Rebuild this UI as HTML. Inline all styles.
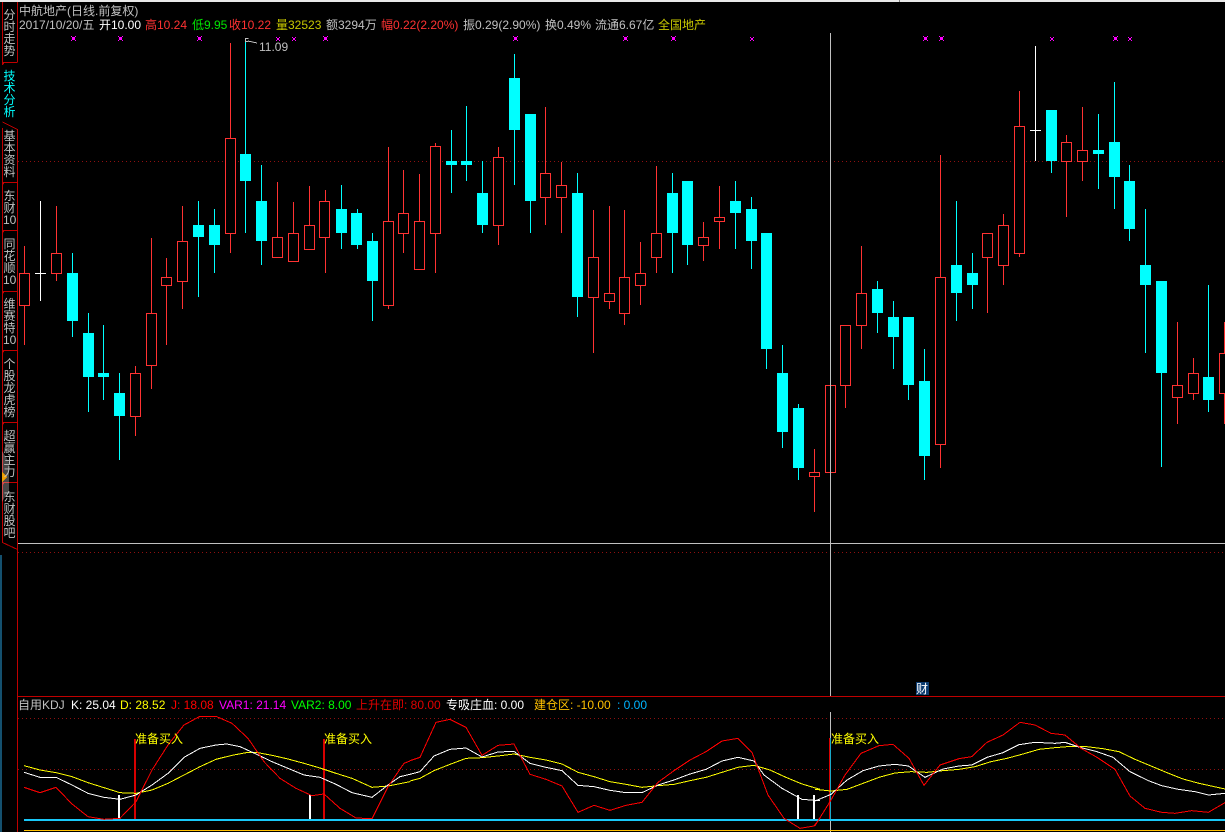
<!DOCTYPE html>
<html><head><meta charset="utf-8"><title>中航地产</title>
<style>
html,body{margin:0;padding:0;background:#000;width:1225px;height:832px;overflow:hidden}
body{position:relative;font-family:"Liberation Sans","WenQuanYi Zen Hei","Noto Sans CJK SC",sans-serif;font-size:12px;line-height:14px;color:#c0c0c0}
svg{position:absolute;left:0;top:0}
.t{position:absolute;white-space:pre;height:14px}
.v{position:absolute;left:3px;width:13px;font-size:12px;line-height:12px;text-align:center;color:#c0c0c0}
.r{color:#ff3232}.g{color:#00e600}.y{color:#c8c800}.w{color:#fff}
</style></head><body>
<svg width="1225" height="832" viewBox="0 0 1225 832" shape-rendering="crispEdges" fill="none">
<defs>
<path id="m" fill="#ff00ff" d="M-1 37h3v3h-3zM-2 36h1v1h-1zM2 36h1v1h-1zM-2 40h1v1h-1zM2 40h1v1h-1z"/>
<path id="s" fill="#ff00ff" d="M-1 38h2v2h-2zM-2 37h1v1h-1zM1 37h1v1h-1zM-2 40h1v1h-1zM1 40h1v1h-1z"/>
</defs>
<rect x="0" y="0" width="1225" height="2" fill="#e8e8e8"/>
<rect x="899" y="0" width="1" height="2" fill="#808080"/>
<rect x="0" y="555" width="2" height="277" fill="#14506e"/>
<!-- sidebar -->
<path stroke="#c00000" d="M2.5 2V62.5H17M17.5 2V62.5M2.5 122L17.5 129.5M17.5 129V832M2.5 128V542.5L17.5 549.5M2.5 182.5H17M2.5 230.5H17M2.5 291.5H17M2.5 350.5H17M2.5 422.5H17M2.5 482.5H17"/>
<path fill="#c00000" d="M2 62h3l-2 3h-1zM2 182h3l-2 3h-1zM2 230h3l-2 3h-1zM2 291h3l-2 3h-1zM2 350h3l-2 3h-1zM2 422h3l-2 3h-1zM2 482h3l-2 3h-1z"/>
<polygon points="2,451 9,462 9,490 2,502" fill="#fff" fill-opacity=".28" shape-rendering="auto"/>
<polygon points="2,472 7,477 2,482" fill="#f0a000"/>
<!-- separators and dotted -->
<path stroke="#901010" stroke-dasharray="1 3" d="M18 161.5H1225M18 552.5H1225M18 718.5H1225M18 769.5H1225"/>
<path stroke="#c00000" d="M18 696.5H1225"/>
<!-- red wicks -->
<path stroke="#ff3232" d="M24.5 246V345M56.5 206V281M135.5 366V436M151.5 238V389M166.5 258V345M182.5 206V309M230.5 43V253M277.5 182V257M293.5 202V261M309.5 186V249M325.5 190V273M388.5 147V309M403.5 170V253M419.5 174V269M435.5 143V273M498.5 147V245M545.5 107V225M561.5 162V233M593.5 210V353M609.5 206V309M624.5 210V325M640.5 242V305M656.5 166V273M703.5 222V261M719.5 186V249M814.5 449V512M845.5 325V408M861.5 246V349M940.5 155V468M987.5 233V313M1003.5 214V285M1019.5 91V257M1066.5 135V217M1082.5 107V181M1177.5 322V424M1193.5 358V400M1224.5 322V424"/>
<!-- cyan wicks -->
<path stroke="#00ffff" d="M72.5 253V337M88.5 313V412M103.5 325V400M119.5 373V460M198.5 201V297M214.5 209V273M245.5 38V233M261.5 165V265M341.5 185V249M357.5 209V249M372.5 233V321M451.5 130V193M466.5 106V181M482.5 161V233M514.5 54V185M530.5 114V233M577.5 173V317M672.5 173V273M687.5 181V265M735.5 181V249M751.5 197V269M766.5 233V369M782.5 345V448M798.5 404V480M830.5 378V492M877.5 281V333M893.5 301V369M908.5 317V400M924.5 349V480M956.5 201V321M972.5 253V309M1051.5 110V173M1098.5 114V189M1114.5 82V209M1129.5 165V241M1145.5 209V353M1161.5 281V467M1208.5 285V412"/>
<!-- white doji -->
<path stroke="#fff" d="M40.5 201V301M35 273.5H46M1035.5 46V161M1030 130.5H1041"/>
<!-- cyan bodies -->
<g fill="#00ffff">
<rect x="67" y="273" width="11" height="48"/><rect x="83" y="333" width="11" height="44"/><rect x="98" y="373" width="11" height="4"/><rect x="114" y="393" width="11" height="23"/><rect x="193" y="225" width="11" height="12"/><rect x="209" y="225" width="11" height="20"/><rect x="240" y="154" width="11" height="27"/><rect x="256" y="201" width="11" height="40"/><rect x="336" y="209" width="11" height="24"/><rect x="351" y="213" width="11" height="32"/><rect x="367" y="241" width="11" height="40"/><rect x="446" y="161" width="11" height="4"/><rect x="461" y="161" width="11" height="4"/><rect x="477" y="193" width="11" height="32"/><rect x="509" y="78" width="11" height="52"/><rect x="525" y="114" width="11" height="87"/><rect x="572" y="193" width="11" height="104"/><rect x="667" y="193" width="11" height="40"/><rect x="682" y="181" width="11" height="64"/><rect x="730" y="201" width="11" height="12"/><rect x="746" y="209" width="11" height="32"/><rect x="761" y="233" width="11" height="116"/><rect x="777" y="373" width="11" height="59"/><rect x="793" y="408" width="11" height="60"/><rect x="872" y="289" width="11" height="24"/><rect x="888" y="317" width="11" height="20"/><rect x="903" y="317" width="11" height="68"/><rect x="919" y="381" width="11" height="75"/><rect x="951" y="265" width="11" height="28"/><rect x="967" y="273" width="11" height="12"/><rect x="1046" y="110" width="11" height="51"/><rect x="1093" y="150" width="11" height="4"/><rect x="1109" y="142" width="11" height="35"/><rect x="1124" y="181" width="11" height="48"/><rect x="1140" y="265" width="11" height="20"/><rect x="1156" y="281" width="11" height="92"/><rect x="1203" y="377" width="11" height="23"/>
</g>
<!-- red bodies -->
<g fill="#000" stroke="#ff3232">
<rect x="19.5" y="273.5" width="10" height="32"/><rect x="51.5" y="253.5" width="10" height="20"/><rect x="130.5" y="373.5" width="10" height="43"/><rect x="146.5" y="313.5" width="10" height="52"/><rect x="161.5" y="277.5" width="10" height="8"/><rect x="177.5" y="241.5" width="10" height="40"/><rect x="225.5" y="138.5" width="10" height="95"/><rect x="272.5" y="237.5" width="10" height="20"/><rect x="288.5" y="233.5" width="10" height="28"/><rect x="304.5" y="225.5" width="10" height="24"/><rect x="319.5" y="201.5" width="10" height="36"/><rect x="383.5" y="221.5" width="10" height="84"/><rect x="398.5" y="213.5" width="10" height="20"/><rect x="414.5" y="221.5" width="10" height="48"/><rect x="430.5" y="146.5" width="10" height="87"/><rect x="493.5" y="157.5" width="10" height="68"/><rect x="540.5" y="173.5" width="10" height="24"/><rect x="556.5" y="185.5" width="10" height="12"/><rect x="588.5" y="257.5" width="10" height="40"/><rect x="604.5" y="293.5" width="10" height="8"/><rect x="619.5" y="277.5" width="10" height="36"/><rect x="635.5" y="273.5" width="10" height="12"/><rect x="651.5" y="233.5" width="10" height="24"/><rect x="698.5" y="237.5" width="10" height="8"/><rect x="714.5" y="217.5" width="10" height="4"/><rect x="809.5" y="472.5" width="10" height="4"/><rect x="825.5" y="385.5" width="10" height="87"/><rect x="840.5" y="325.5" width="10" height="60"/><rect x="856.5" y="293.5" width="10" height="32"/><rect x="935.5" y="277.5" width="10" height="167"/><rect x="982.5" y="233.5" width="10" height="24"/><rect x="998.5" y="225.5" width="10" height="40"/><rect x="1014.5" y="126.5" width="10" height="127"/><rect x="1061.5" y="142.5" width="10" height="19"/><rect x="1077.5" y="150.5" width="10" height="11"/><rect x="1172.5" y="385.5" width="10" height="12"/><rect x="1188.5" y="373.5" width="10" height="20"/><rect x="1219.5" y="353.5" width="10" height="40"/>
</g>
<!-- magenta marks -->
<use href="#m" x="73"/><use href="#m" x="120"/><use href="#m" x="199"/><use href="#s" x="278"/><use href="#s" x="294"/><use href="#m" x="325"/><use href="#m" x="515"/><use href="#m" x="625"/><use href="#m" x="673"/><use href="#s" x="752"/><use href="#m" x="925"/><use href="#m" x="941"/><use href="#s" x="1052"/><use href="#m" x="1115"/><use href="#s" x="1130"/>
<!-- high flag -->
<path stroke="#c0c0c0" d="M245.5 38.5h3M245.5 41.5h3M245.5 38V42M248 41L257 43"/>
<!-- crosshair -->
<path stroke="#c0c0c0" d="M830.5 33V696M18 543.5H1225"/>
<path stroke="#c0c0c0" d="M830.5 712V832"/>
<!-- KDJ -->
<rect x="24" y="819" width="1201" height="2" fill="#19c8f8"/>
<rect x="24" y="830" width="1201" height="1" fill="#ffc000"/>
<g fill="#fff">
<rect x="118" y="795" width="2" height="24"/><rect x="309" y="795" width="2" height="24"/><rect x="797" y="795" width="2" height="24"/><rect x="813" y="795" width="2" height="24"/>
</g>
<g fill="#d80000"><rect x="134" y="739" width="2" height="80"/><rect x="323" y="739" width="2" height="80"/></g>
<rect x="829" y="738" width="1" height="81" fill="#d80000"/>
<rect x="830" y="738" width="1" height="81" fill="#19a8c8"/>
<g stroke-width="1" vector-effect="non-scaling-stroke">
<!-- left -->
<g transform="translate(0,680) scale(.33333)">
<polyline vector-effect="non-scaling-stroke" stroke="#ffff00" points="72,257 120,270 168,278 216,290 264,308 312,323 360,338 408,340 456,330 504,310 552,285 600,260 648,238 696,226 744,217 768,217 816,226 864,237 912,250 960,264 1008,280 1056,295 1116,322 1164,318 1230,305"/>
<polyline vector-effect="non-scaling-stroke" stroke="#ffffff" points="72,277 120,292 168,292 216,315 264,340 312,352 360,358 408,345 456,315 504,280 552,232 600,205 648,195 680,192 720,200 768,222 816,245 864,265 912,285 960,292 1008,313 1056,338 1116,352 1164,315 1200,290 1230,283"/>
<polyline vector-effect="non-scaling-stroke" stroke="#ff0000" points="72,322 120,338 168,322 216,372 264,410 312,418 360,415 408,365 456,270 504,195 552,135 600,109 648,109 696,130 744,175 792,245 840,295 888,325 936,347 972,342 1020,385 1068,414 1116,416 1164,320 1212,250 1230,243"/>
</g>
<g transform="translate(410,680) scale(.33333)">
<polyline vector-effect="non-scaling-stroke" stroke="#ffff00" points="0,303 30,295 72,272 120,253 168,235 216,233 264,228 312,222 360,232 408,240 456,252 504,277 552,290 600,305 648,313 696,322 744,317 792,313 840,302 888,292 936,277 984,262 1032,256 1080,270 1128,292 1176,312 1230,328"/>
<polyline vector-effect="non-scaling-stroke" stroke="#ffffff" points="0,283 30,275 72,228 120,208 168,204 216,231 264,216 312,214 360,250 408,262 456,272 504,316 552,320 600,331 648,338 696,338 744,315 792,300 840,282 888,268 936,243 984,232 1032,243 1062,285 1116,325 1176,358 1230,362"/>
<polyline vector-effect="non-scaling-stroke" stroke="#ff0000" points="0,242 30,232 78,127 120,118 168,142 216,226 264,196 312,192 360,283 408,298 456,318 504,397 552,376 600,391 648,376 696,367 744,307 792,272 840,240 888,215 936,183 984,175 1026,217 1074,345 1122,415 1170,445 1212,438 1230,415"/>
</g>
<g transform="translate(815,680) scale(.33333)">
<polyline vector-effect="non-scaling-stroke" stroke="#ffff00" points="0,328 48,333 96,328 144,310 192,292 240,279 288,275 336,277 384,272 432,268 480,260 528,245 576,235 624,222 672,208 720,203 768,199 816,200 864,206 912,215 960,238 1008,258 1056,278 1104,297 1152,310 1230,327"/>
<polyline vector-effect="non-scaling-stroke" stroke="#ffffff" points="0,363 48,343 96,300 144,272 192,258 240,253 280,258 330,292 384,267 432,258 470,255 516,232 564,218 612,194 660,187 720,190 750,187 798,203 846,215 894,232 945,275 1000,302 1040,317 1090,328 1140,335 1180,345 1230,340"/>
<polyline vector-effect="non-scaling-stroke" stroke="#ff0000" points="0,437 48,360 90,285 138,220 192,197 234,193 282,235 327,316 375,255 432,236 470,230 516,187 564,165 615,127 660,135 708,160 750,165 798,205 846,232 900,268 945,348 990,385 1040,397 1080,400 1130,392 1180,397 1230,368"/>
</g>
</g>
<rect x="916" y="682" width="13" height="13" fill="#0c3c70"/>
</svg>

<!-- sidebar text -->
<div class="v" style="top:9px">分<br>时<br>走<br>势</div>
<div class="v" style="top:70px;color:#00ffff">技<br>术<br>分<br>析</div>
<div class="v" style="top:130px">基<br>本<br>资<br>料</div>
<div class="v" style="top:190px">东<br>财<br>10</div>
<div class="v" style="top:238px">同<br>花<br>顺<br>10</div>
<div class="v" style="top:298px">维<br>赛<br>特<br>10</div>
<div class="v" style="top:358px">个<br>股<br>龙<br>虎<br>榜</div>
<div class="v" style="top:430px">超<br>赢<br>主<br>力</div>
<div class="v" style="top:491px">东<br>财<br>股<br>吧</div>

<!-- header -->
<div class="t" style="left:19px;top:4px">中航地产(日线.前复权)</div>
<div class="t" style="left:19px;top:18px">2017/10/20/五</div>
<div class="t w" style="left:99px;top:18px">开10.00</div>
<div class="t r" style="left:145px;top:18px">高10.24</div>
<div class="t g" style="left:192px;top:18px">低9.95</div>
<div class="t r" style="left:229px;top:18px">收10.22</div>
<div class="t y" style="left:276px;top:18px">量32523</div>
<div class="t" style="left:326px;top:18px">额3294万</div>
<div class="t r" style="left:381px;top:18px">幅0.22(2.20%)</div>
<div class="t" style="left:463px;top:18px">振0.29(2.90%)</div>
<div class="t" style="left:545px;top:18px">换0.49%</div>
<div class="t" style="left:595px;top:18px">流通6.67亿</div>
<div class="t y" style="left:658px;top:18px">全国地产</div>
<div class="t" style="left:259px;top:40px">11.09</div>

<!-- KDJ titles -->
<div class="t" style="left:18px;top:698px">自用KDJ</div>
<div class="t w" style="left:71px;top:698px">K: 25.04</div>
<div class="t" style="left:120px;top:698px;color:#ffff00">D: 28.52</div>
<div class="t" style="left:171px;top:698px;color:#ff0000">J: 18.08</div>
<div class="t" style="left:219px;top:698px;color:#ff00ff">VAR1: 21.14</div>
<div class="t" style="left:291px;top:698px;color:#00ff00">VAR2: 8.00</div>
<div class="t" style="left:356px;top:698px;color:#e00000">上升在即: 80.00</div>
<div class="t w" style="left:446px;top:698px">专吸庄血: 0.00</div>
<div class="t" style="left:534px;top:698px;color:#ffc000">建仓区: -10.00</div>
<div class="t" style="left:617px;top:698px;color:#00b4ff">: 0.00</div>
<div class="t" style="left:135px;top:732px;color:#ffff00">准备买入</div>
<div class="t" style="left:324px;top:732px;color:#ffff00">准备买入</div>
<div class="t" style="left:831px;top:732px;color:#ffff00">准备买入</div>
<div class="t w" style="left:916px;top:682px">财</div>
</body></html>
